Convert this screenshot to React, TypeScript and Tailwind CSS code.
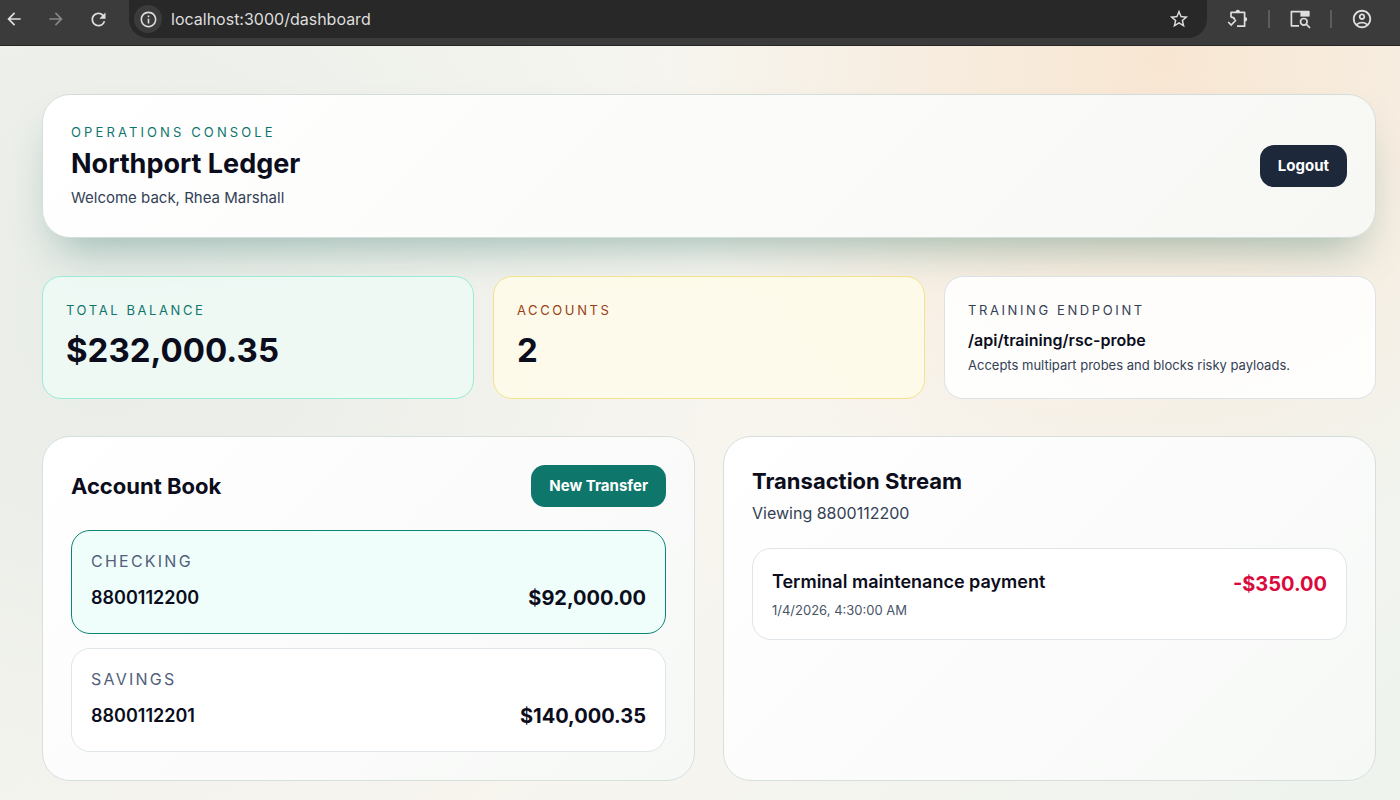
import { useState } from 'react';
import type { ReactNode } from 'react';
import {
  MdArrowBack,
  MdArrowForward,
  MdInfoOutline,
  MdOutlineAccountCircle,
  MdRefresh,
  MdStarOutline,
} from 'react-icons/md';

interface Account {
  type: string;
  number: string;
  balance: string;
}

interface Transaction {
  id: string;
  account: string;
  title: string;
  date: string;
  amount: string;
}

const accounts: Account[] = [
  { type: 'Checking', number: '8800112200', balance: '$92,000.00' },
  { type: 'Savings', number: '8800112201', balance: '$140,000.35' },
];

const transactions: Transaction[] = [
  {
    id: 'tx-1',
    account: '8800112200',
    title: 'Terminal maintenance payment',
    date: '1/4/2026, 4:30:00 AM',
    amount: '-$350.00',
  },
];

export default function App() {
  const [selected, setSelected] = useState(accounts[0].number);
  const visible = transactions.filter((t) => t.account === selected);

  return (
    <div className="flex min-h-screen flex-col font-['Inter','Liberation_Sans',sans-serif] text-[#0b0d1c]">
      <BrowserBar />
      <main className="flex flex-1 flex-col bg-[radial-gradient(circle_at_83%_2%,#f8e6d2_0%,transparent_36%),radial-gradient(circle_at_8%_36%,#e8ece7_0%,transparent_44%),linear-gradient(135deg,#f3f5ef_0%,#f8f5ef_55%,#eef3ee_100%)] pt-12 pr-6 pb-5 pl-[42px]">
        <header className="flex items-center justify-between rounded-[28px] border border-[#d3dedb] bg-linear-135 from-white to-[#f7f8f4] px-7 py-[27px] shadow-[0_24px_44px_-16px_rgba(15,95,85,0.38)]">
          <div>
            <p className="text-[13px] leading-5 tracking-[0.24em] text-[#0f766e] uppercase">Operations Console</p>
            <h1 className="mt-1 text-[27px] leading-9 font-bold">Northport Ledger</h1>
            <p className="mt-1 text-[15px] leading-6 text-[#334155]">Welcome back, Rhea Marshall</p>
          </div>
          <button
            type="button"
            className="h-[42px] cursor-pointer rounded-[14px] bg-[#1d283a] px-[18px] text-[15px] font-bold text-white"
          >
            Logout
          </button>
        </header>

        <section aria-label="Summary" className="mt-[38px] grid grid-cols-3 gap-[19px]">
          <div className="rounded-[19px] border border-[#99ebd8] bg-[#effaf6]/85 p-[23px]">
            <StatLabel className="text-[#0f766e]">Total Balance</StatLabel>
            <p className="mt-[10px] text-[33px] leading-10 font-bold">$232,000.35</p>
          </div>
          <div className="rounded-[19px] border border-[#f5e28c] bg-[#fefbea]/90 p-[23px]">
            <StatLabel className="text-[#9a3f12]">Accounts</StatLabel>
            <p className="mt-[10px] text-[33px] leading-10 font-bold">2</p>
          </div>
          <div className="rounded-[19px] border border-[#dbe2e8] bg-white/90 p-[23px]">
            <StatLabel className="text-[#334155]">Training Endpoint</StatLabel>
            <p className="mt-2 text-base leading-6 font-semibold">/api/training/rsc-probe</p>
            <p className="mt-[3px] text-[13px] leading-5 text-[#334155]">
              Accepts multipart probes and blocks risky payloads.
            </p>
          </div>
        </section>

        <div className="mt-[37px] grid grid-cols-2 gap-7">
          <Panel>
            <div className="mb-[23px] flex items-center justify-between">
              <h2 className="text-[22px] leading-8 font-bold">Account Book</h2>
              <button
                type="button"
                className="h-[42px] cursor-pointer rounded-[14px] bg-[#0f766c] px-[18px] text-[15px] font-bold text-white"
              >
                New Transfer
              </button>
            </div>
            <div className="flex flex-col gap-[14px]">
              {accounts.map((account) => (
                <AccountCard
                  key={account.number}
                  account={account}
                  active={account.number === selected}
                  onSelect={() => setSelected(account.number)}
                />
              ))}
            </div>
          </Panel>

          <Panel>
            <h2 className="text-[22px] leading-8 font-bold">Transaction Stream</h2>
            <p className="mt-1 text-base leading-6 text-[#334155]">Viewing {selected}</p>
            <ul className="mt-[23px] flex flex-col gap-[14px]">
              {visible.map((tx) => (
                <li
                  key={tx.id}
                  className="flex items-start justify-between rounded-[19px] border border-[#dfe5e8] bg-white px-[19px] py-[19px]"
                >
                  <div>
                    <p className="text-lg leading-7 font-semibold">{tx.title}</p>
                    <p className="mt-1 text-[13px] leading-5 text-[#475569]">{tx.date}</p>
                  </div>
                  <p className="text-xl leading-8 font-bold text-[#d90b3e]">{tx.amount}</p>
                </li>
              ))}
            </ul>
          </Panel>
        </div>
      </main>
    </div>
  );
}

function BrowserBar() {
  return (
    <nav
      aria-label="Browser"
      className="flex h-[46px] items-start border-b border-[#262626] bg-[#3b3b3b] pr-[27px] pl-1 text-[#dedede]"
    >
      <div className="flex h-[38px] items-center gap-[22px]">
        <button type="button" aria-label="Back"><MdArrowBack size={20} /></button>
        <button type="button" aria-label="Forward" className="text-[#868686]"><MdArrowForward size={20} /></button>
        <button type="button" aria-label="Reload"><MdRefresh size={21} /></button>
      </div>
      <div className="ml-5 flex h-[38px] flex-1 items-center rounded-b-[19px] bg-[#282828] pr-[17px] pl-[5px]">
        <button
          type="button"
          aria-label="Site information"
          className="flex size-7 items-center justify-center rounded-full bg-[#3b3b3b]"
        >
          <MdInfoOutline size={19} />
        </button>
        <input
          type="text"
          aria-label="Address"
          defaultValue="localhost:3000/dashboard"
          className="ml-[9px] flex-1 bg-transparent text-base outline-none"
        />
        <button type="button" aria-label="Bookmark"><MdStarOutline size={22} /></button>
      </div>
      <div className="ml-5 flex h-[38px] items-center gap-[19px]">
        <button type="button" aria-label="Extensions"><ExtensionIcon /></button>
        <span className="h-[18px] w-0.5 bg-[#5c5c5c]" />
        <button type="button" aria-label="Search tabs"><TabSearchIcon /></button>
        <span className="h-[18px] w-0.5 bg-[#5c5c5c]" />
        <button type="button" aria-label="Profile"><MdOutlineAccountCircle size={22} /></button>
      </div>
    </nav>
  );
}

function StatLabel({ className, children }: { className: string; children: ReactNode }) {
  return <p className={`text-[13px] leading-5 tracking-[0.2em] uppercase ${className}`}>{children}</p>;
}

function Panel({ children }: { children: ReactNode }) {
  return (
    <section className="rounded-[28px] border border-[#d7dfdd] bg-linear-135 from-white to-[#f6f8f6] p-7">
      {children}
    </section>
  );
}

function AccountCard({ account, active, onSelect }: { account: Account; active: boolean; onSelect: () => void }) {
  return (
    <button
      type="button"
      aria-pressed={active}
      onClick={onSelect}
      className={`cursor-pointer rounded-[19px] border px-[19px] pt-[18px] pb-[21px] text-left ${
        active ? 'border-[#0f8478] bg-[#effefb]' : 'border-[#dfe5e8] bg-white'
      }`}
    >
      <span className="block text-base leading-6 tracking-[0.14em] text-[#52607a] uppercase">{account.type}</span>
      <span className="mt-[11px] flex items-center justify-between leading-7">
        <span className="text-lg font-semibold">{account.number}</span>
        <span className="text-xl font-bold">{account.balance}</span>
      </span>
    </button>
  );
}

function ExtensionIcon() {
  return (
    <svg width="22" height="22" viewBox="0 0 22 22" fill="none" stroke="currentColor" strokeWidth="1.7">
      <path d="M4 9.6V4.4h13.6v13.8H10" strokeLinejoin="round" />
      <path d="M4 9.2c2.2 0 3.4 1 3.7 2.6" />
      <path d="M1.2 14l3 3 4.8-5" />
      <path d="M8.6 4a2.2 2.2 0 0 1 4.4 0zM18 9a2.2 2.2 0 0 1 0 4.4z" fill="currentColor" stroke="none" />
    </svg>
  );
}

function TabSearchIcon() {
  return (
    <svg width="22" height="22" viewBox="0 0 22 22" fill="none" stroke="currentColor" strokeWidth="1.7">
      <path d="M10 17.8H2.4V3.6h17.2v4.2" strokeLinejoin="round" />
      <path d="M11.4 3h9v5.6h-9z" fill="currentColor" stroke="none" />
      <circle cx="14.8" cy="13.8" r="3.3" />
      <path d="M17.2 16.2l3.8 3.8" />
    </svg>
  );
}
